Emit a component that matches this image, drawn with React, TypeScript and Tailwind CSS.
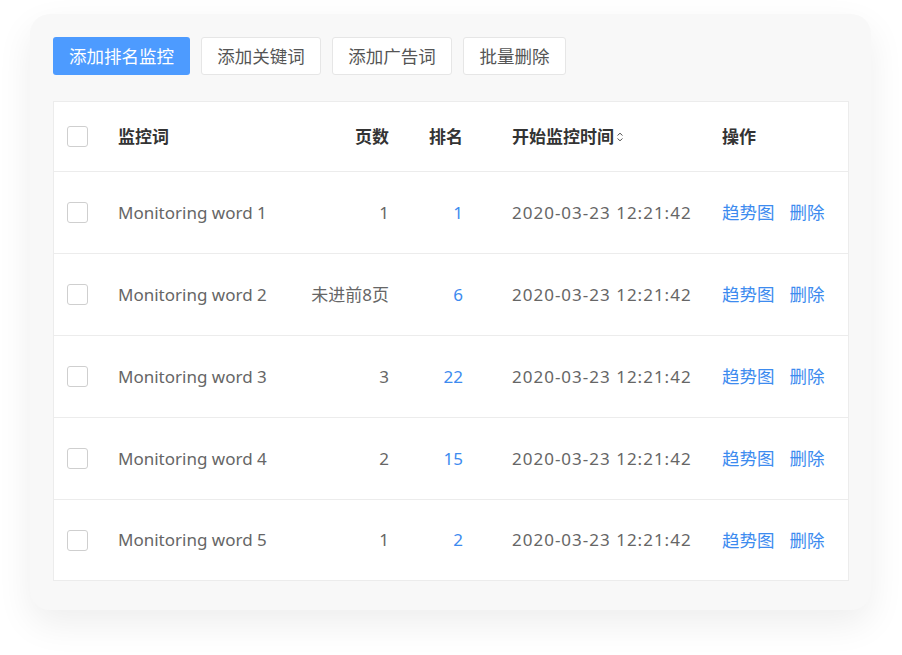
import React from "react";

const rows = [
  { word: "Monitoring word 1", pages: "1", rank: "1" },
  { word: "Monitoring word 2", pages: "未进前8页", rank: "6" },
  { word: "Monitoring word 3", pages: "3", rank: "22" },
  { word: "Monitoring word 4", pages: "2", rank: "15" },
  { word: "Monitoring word 5", pages: "1", rank: "2" },
];

const font = { fontFamily: '"Noto Sans", "Noto Sans CJK SC", sans-serif' };
const cols = "grid grid-cols-[64px_181px_90px_74px_259px_125px]";

function Checkbox() {
  return <span className="block h-[21px] w-[21px] rounded-[3px] border border-[#cfcfcf] bg-white" />;
}

export default function App() {
  return (
    <div className="h-[655px] w-[902px] bg-white pt-[14px] pl-[30px]" style={font}>
      <div className="h-[596px] w-[841px] rounded-[20px] bg-[#f8f8f8] pt-[23px] pl-[23px] shadow-[0_14px_36px_rgba(0,0,0,0.07)]">
        {/* toolbar */}
        <div className="flex gap-[11px] text-[17.5px]">
          <button className="h-[38px] w-[137px] rounded-[3px] bg-[#4d9bff] text-white">添加排名监控</button>
          <button className="h-[38px] w-[120px] rounded-[3px] border border-[#e6e6e6] bg-white text-[#555]">添加关键词</button>
          <button className="h-[38px] w-[120px] rounded-[3px] border border-[#e6e6e6] bg-white text-[#555]">添加广告词</button>
          <button className="h-[38px] w-[103px] rounded-[3px] border border-[#e6e6e6] bg-white text-[#555]">批量删除</button>
        </div>

        {/* table */}
        <div className="mt-[26px] w-[796px] border border-[#ececec] bg-white text-[17px]">
          <div className={`${cols} h-[70px] items-center border-b border-[#ececec] font-bold text-[#333]`}>
            <div className="pl-[13px]"><Checkbox /></div>
            <div>监控词</div>
            <div className="text-right">页数</div>
            <div className="text-right">排名</div>
            <div className="flex items-center pl-[49px]">
              开始监控时间
              <svg width="8" height="10" viewBox="0 0 8 10" className="ml-[2px]" fill="none" stroke="#555" strokeWidth="1">
                <path d="M1.5 3.5 4 1.2 6.5 3.5" />
                <path d="M1.5 6.5 4 8.8 6.5 6.5" />
              </svg>
            </div>
            <div>操作</div>
          </div>
          {rows.map((r, i) => (
            <div
              key={r.word}
              className={`${cols} items-center text-[#666] ${i < rows.length - 1 ? "h-[82px] border-b border-[#ececec]" : "h-[80px]"}`}
            >
              <div className="pl-[13px]"><Checkbox /></div>
              <div>{r.word}</div>
              <div className="text-right">{r.pages}</div>
              <div className="text-right text-[#3d8bef]">{r.rank}</div>
              <div className="pl-[49px] tracking-[1px]">2020-03-23 12:21:42</div>
              <div className="flex gap-[15px] text-[17.5px] text-[#3d8bef]">
                <span>趋势图</span>
                <span>删除</span>
              </div>
            </div>
          ))}
        </div>
      </div>
    </div>
  );
}
